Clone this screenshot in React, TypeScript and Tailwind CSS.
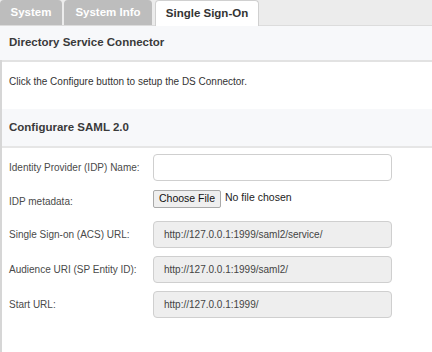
export default function App() {
  const rows = [
    { label: "Single Sign-on (ACS) URL:", value: "http://127.0.0.1:1999/saml2/service/" },
    { label: "Audience URI (SP Entity ID):", value: "http://127.0.0.1:1999/saml2/" },
    { label: "Start URL:", value: "http://127.0.0.1:1999/" },
  ];

  return (
    <div className="w-[432px] h-[352px] overflow-hidden bg-white font-['Liberation_Sans',Arial,sans-serif] text-[#333]">
      {/* Tabs */}
      <div className="h-[26px] bg-[#ececec] border-b border-[#dcdcdc] flex items-end gap-[2px] pl-0">
        <div className="h-[25px] w-[62px] bg-[#bdbdbd] rounded-t-[4px] flex items-center justify-center text-white text-[11.5px] font-bold">
          System
        </div>
        <div className="h-[25px] w-[88px] bg-[#bdbdbd] rounded-t-[4px] flex items-center justify-center text-white text-[11.5px] font-bold">
          System Info
        </div>
        <div className="h-[26px] w-[104px] ml-[1px] -mb-px bg-white border border-b-0 border-[#d0d0d0] rounded-t-[4px] flex items-center justify-center text-[#333] text-[11.5px] font-bold">
          Single Sign-On
        </div>
      </div>

      {/* Directory header */}
      <div className="h-[34px] bg-[#f7f8fa] flex items-center px-[9px] text-[11.5px] font-bold text-[#3a3a3a]">
        Directory Service Connector
      </div>

      <div className="border-l-2 border-[#d6d6d6] h-full">
        <div className="border-t-2 border-[#e2e2e2] h-[49px] pt-[13px] px-[7px] text-[10px] leading-[13px] text-[#333]">
          Click the Configure button to setup the DS Connector.
        </div>

        <div className="h-[39px] bg-[#f7f8fa] border-b-2 border-[#e6e6e6] flex items-center px-[7px] text-[11.5px] font-bold text-[#3a3a3a]">
          Configurare SAML 2.0
        </div>

        <div className="flex flex-col pt-[6px] text-[10px] text-[#4a4a4a]">
          <div className="flex items-center h-[27px]">
            <div className="w-[151px] pl-[7px]">Identity Provider (IDP) Name:</div>
            <div className="w-[239px] h-[27px] bg-white border border-[#cfcfcf] rounded-[4px]" />
          </div>

          <div className="flex items-center mt-[9px] h-[18px]">
            <div className="w-[151px] pl-[7px] pt-[5px]">IDP metadata:</div>
            <div className="h-[18px] px-[5px] bg-[#efefef] border border-[#a9a9a9] rounded-[2px] flex items-center text-[10.5px] text-[#111]">
              Choose File
            </div>
            <div className="ml-[4px] -mt-[3px] text-[10.5px] text-[#222]">No file chosen</div>
          </div>

          {rows.map((r, i) => (
            <div key={i} className={`flex items-center h-[27px] ${i === 0 ? "mt-[13px]" : "mt-[8px]"}`}>
              <div className="w-[151px] pl-[7px]">{r.label}</div>
              <div className="w-[239px] h-[27px] bg-[#eeeeee] border border-[#cfcfcf] rounded-[4px] flex items-center pl-[10px] text-[10px] text-[#444]">
                {r.value}
              </div>
            </div>
          ))}
        </div>
      </div>
    </div>
  );
}
